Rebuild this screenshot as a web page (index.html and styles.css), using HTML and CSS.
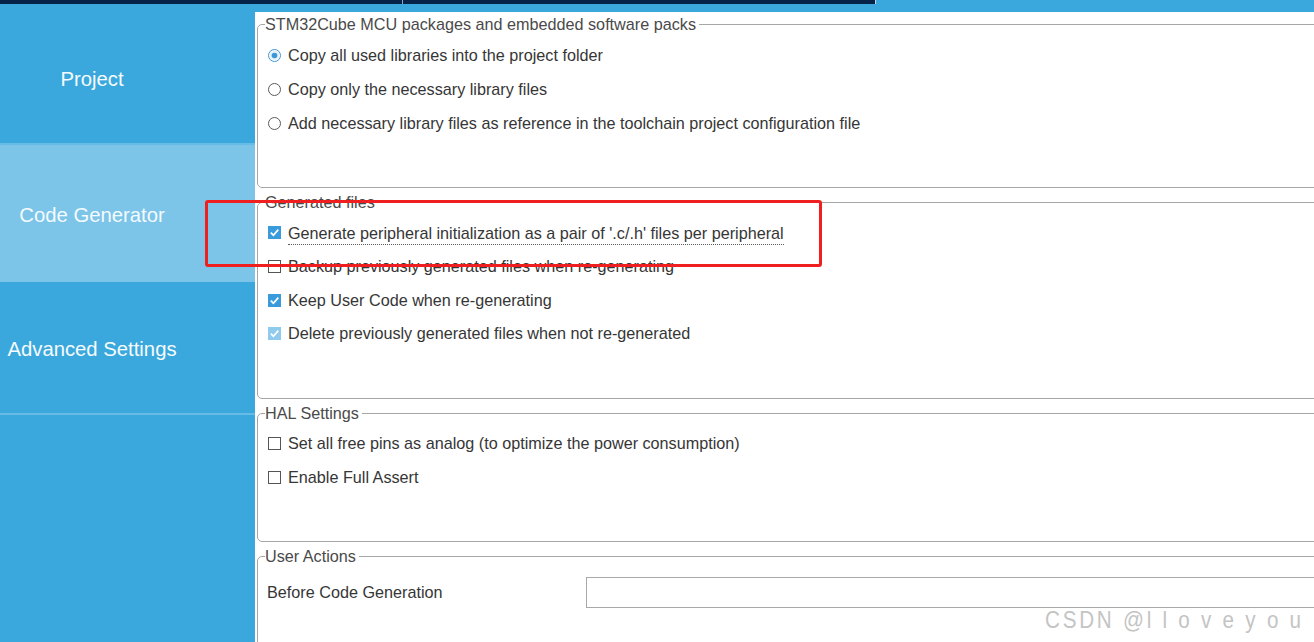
FILE: index.html
```html
<!DOCTYPE html>
<html>
<head>
<meta charset="utf-8">
<link rel="stylesheet" href="styles.css">
</head>
<body>
<div class="app">
  <div class="tabs">
    <div class="tab tab-one"></div>
    <div class="tab tab-two"></div>
  </div>
  <div class="main">
    <nav class="sidebar">
      <div class="nav-item nav-line">Project</div>
      <div class="nav-item nav-active">Code Generator</div>
      <div class="nav-item nav-line">Advanced Settings</div>
    </nav>
    <section class="content">
      <fieldset class="group g1">
        <legend>STM32Cube MCU packages and embedded software packs</legend>
        <div class="row">
          <svg class="ico" viewBox="0 0 13 13"><circle cx="6.5" cy="6.5" r="6" fill="#fff" stroke="#3d97d6"/><circle cx="6.5" cy="6.5" r="4.6" fill="#e3f1fb"/><circle cx="6.5" cy="6.5" r="2.8" fill="#3d97d6"/></svg>
          <span>Copy all used libraries into the project folder</span>
        </div>
        <div class="row">
          <svg class="ico" viewBox="0 0 13 13"><circle cx="6.5" cy="6.5" r="6" fill="#fff" stroke="#5a5a5a"/></svg>
          <span>Copy only the necessary library files</span>
        </div>
        <div class="row">
          <svg class="ico" viewBox="0 0 13 13"><circle cx="6.5" cy="6.5" r="6" fill="#fff" stroke="#5a5a5a"/></svg>
          <span>Add necessary library files as reference in the toolchain project configuration file</span>
        </div>
      </fieldset>

      <fieldset class="group g2">
        <legend>Generated files</legend>
        <div class="row crow">
          <svg class="ico" viewBox="0 0 13 13"><rect width="13" height="13" fill="#3a9bdc"/><path d="M2.8 6.6 L5.4 9.2 L10.3 3.6" fill="none" stroke="#fff" stroke-width="1.7"/></svg>
          <span class="focus">Generate peripheral initialization as a pair of '.c/.h' files per peripheral</span>
        </div>
        <div class="row crow">
          <svg class="ico" viewBox="0 0 13 13"><rect x="0.5" y="0.5" width="12" height="12" fill="#fff" stroke="#555"/></svg>
          <span>Backup previously generated files when re-generating</span>
        </div>
        <div class="row crow">
          <svg class="ico" viewBox="0 0 13 13"><rect width="13" height="13" fill="#3a9bdc"/><path d="M2.8 6.6 L5.4 9.2 L10.3 3.6" fill="none" stroke="#fff" stroke-width="1.7"/></svg>
          <span>Keep User Code when re-generating</span>
        </div>
        <div class="row crow">
          <svg class="ico" viewBox="0 0 13 13"><rect width="13" height="13" fill="#8ecbee"/><path d="M2.8 6.6 L5.4 9.2 L10.3 3.6" fill="none" stroke="#fff" stroke-width="1.7"/></svg>
          <span>Delete previously generated files when not re-generated</span>
        </div>
      </fieldset>

      <fieldset class="group g3">
        <legend>HAL Settings</legend>
        <div class="row crow">
          <svg class="ico" viewBox="0 0 13 13"><rect x="0.5" y="0.5" width="12" height="12" fill="#fff" stroke="#555"/></svg>
          <span>Set all free pins as analog (to optimize the power consumption)</span>
        </div>
        <div class="row crow">
          <svg class="ico" viewBox="0 0 13 13"><rect x="0.5" y="0.5" width="12" height="12" fill="#fff" stroke="#555"/></svg>
          <span>Enable Full Assert</span>
        </div>
      </fieldset>

      <fieldset class="group g4">
        <legend>User Actions</legend>
        <div class="action-row">
          <span class="action-label">Before Code Generation</span>
          <div class="input"></div>
        </div>
      </fieldset>
    </section>
  </div>
  <div class="annotation"></div>
  <div class="watermark">CSDN @l l o v e y o u</div>
</div>
</body>
</html>
```
FILE: styles.css
```css
* { box-sizing: border-box; }
html, body { margin: 0; padding: 0; }
body {
  width: 1314px;
  height: 642px;
  overflow: hidden;
  font-family: "Liberation Sans", Arial, sans-serif;
  background: #3aa8dc;
}
.app {
  position: relative;
  width: 1314px;
  height: 642px;
  overflow: hidden;
  background: #3aa8dc;
}
.tabs {
  display: flex;
  height: 4px;
}
.tab { background: #062249; height: 4px; }
.tab-one { width: 403px; border-right: 1px solid #8fa4bf; }
.tab-two { width: 473px; border-right: 1px solid #c7d7e6; }
.main {
  display: flex;
  margin-top: 8px;
  height: 630px;
}
.sidebar {
  width: 255px;
  flex: 0 0 255px;
  background: #3aa8dc;
  display: flex;
  flex-direction: column;
}
.nav-item {
  display: flex;
  align-items: center;
  justify-content: center;
  padding: 4px 71px 0 0;
  color: #f6fbfe;
  font-size: 20.3px;
  white-space: nowrap;
}
.nav-item:first-child { height: 133px; }
.nav-active {
  height: 137px;
  background: #7cc4e8;
  color: #f4fbff;
}
.nav-item:last-child { height: 133px; }
.nav-line { border-bottom: 2px solid #66bce6; }
.content {
  flex: 1;
  background: #fff;
  overflow: hidden;
  padding: 3px 0 0 2px;
}
.group {
  margin: 0 0 5px 0;
  width: 1090px;
  border: 1px solid #a6a6a6;
  border-radius: 5px;
  padding: 5px 0 0 7px;
  color: #363636;
  font-size: 16.2px;
}
.group legend {
  padding: 0 3px 0 0;
  line-height: 18px;
  font-size: 16.2px;
  color: #4a4a4a;
}
.g1 { height: 173px; }
.g2 { height: 206px; }
.g3 { height: 138px; }
.g4 { height: 140px; }
.row {
  display: flex;
  align-items: center;
  height: 34px;
  gap: 7px;
  padding-left: 3px;
  white-space: nowrap;
}
.crow { height: 33.7px; }
.ico { width: 13px; height: 13px; flex: 0 0 13px; }
.focus {
  border-bottom: 1px dotted #5a5a5a;
  padding-bottom: 1px;
  margin-top: 3px;
}
.action-row {
  display: flex;
  align-items: center;
  height: 44px;
  padding-left: 2px;
}
.action-label {
  width: 319px;
  flex: 0 0 319px;
  color: #363636;
}
.input {
  flex: 1;
  height: 31px;
  border: 1px solid #a8a8a8;
  background: #fff;
}
.annotation {
  position: absolute;
  left: 205px;
  top: 200px;
  width: 617px;
  height: 67px;
  border: 3px solid #ef1f1f;
  border-radius: 3px;
}
.watermark {
  position: absolute;
  left: 1045px;
  top: 606px;
  font-size: 24px;
  color: #c4c4c4;
  letter-spacing: 3.2px;
  transform: scaleX(0.86);
  transform-origin: left top;
  white-space: nowrap;
}
```
